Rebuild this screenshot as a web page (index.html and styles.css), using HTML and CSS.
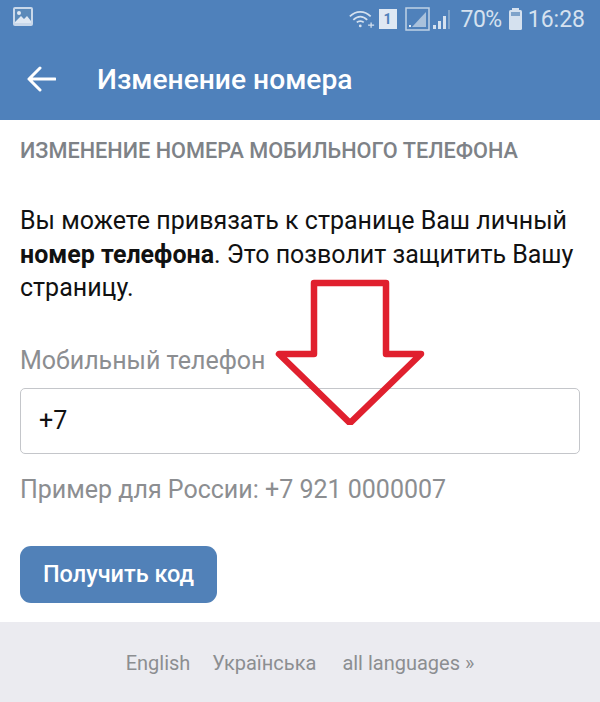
FILE: index.html
```html
<!DOCTYPE html>
<html lang="ru">
<head>
    <meta charset="UTF-8">
    <meta name="viewport" content="width=device-width, initial-scale=1.0">
    <title>Изменение номера</title>
    <link rel="stylesheet" href="styles.css">
</head>
<body>
    <div class="statusbar">
        <svg class="pic-icon" width="21" height="20" viewBox="0 0 21 20">
            <rect x="0" y="0" width="20" height="19" rx="2" fill="#c9d8ea"/>
            <rect x="2" y="2" width="16" height="14" fill="#5b8aba"/>
            <circle cx="6" cy="6" r="2" fill="#dfe8f3"/>
            <path d="M2 15 L8 9 L11 12 L14 9 L18 14 L18 16 L2 16 Z" fill="#dfe8f3"/>
        </svg>
        <div class="status-right">
            <svg class="wifi" width="26" height="20" viewBox="0 0 30 20">
                <path d="M1 7 C8 0 18 0 25 7" fill="none" stroke="#d5e1ef" stroke-width="2"/>
                <path d="M5 11 C10 6 16 6 21 11" fill="none" stroke="#d5e1ef" stroke-width="2"/>
                <path d="M9 14 C11 12 15 12 17 14" fill="none" stroke="#d5e1ef" stroke-width="2"/>
                <circle cx="13" cy="18" r="1.6" fill="#d5e1ef"/>
                <path d="M22 17 L29 17 M25.500 14 L25.500 20" stroke="#d5e1ef" stroke-width="1.500"/>
            </svg>
            <span class="sim">1</span>
            <svg class="signal-box" width="25" height="24" viewBox="0 0 25 24">
                <rect x="1" y="1" width="23" height="22" fill="none" stroke="#c0d2e6" stroke-width="1.500"/>
                <path d="M7 20 L21 20 L21 5 Z" fill="#a9c1dc"/>
                <rect x="4" y="18" width="2" height="2" fill="#e6eef6"/>
            </svg>
            <svg class="signal" width="20" height="22" viewBox="0 0 20 22">
                <rect x="1" y="17" width="3" height="4" fill="#d5e1ef"/>
                <rect x="6" y="13" width="3" height="8" fill="#d5e1ef"/>
                <rect x="11" y="8" width="3" height="13" fill="#d5e1ef"/>
                <rect x="16" y="2" width="2" height="19" fill="#7fa3ca"/>
            </svg>
            <span class="percent">70%</span>
            <svg class="battery" width="15" height="22" viewBox="0 0 15 22">
                <rect x="4" y="0" width="7" height="3" fill="#d5e1ef"/>
                <rect x="1" y="2" width="13" height="20" rx="1.500" fill="#d5e1ef"/>
                <rect x="3" y="4" width="9" height="4" fill="#7fa3ca"/>
            </svg>
            <span class="time">16:28</span>
        </div>
    </div>
    <div class="header">
        <svg class="back" width="30" height="26" viewBox="0 0 30 26">
            <path d="M14 2 L3 13 L14 24 M3 13 L29 13" fill="none" stroke="#fff" stroke-width="3" stroke-linecap="round" stroke-linejoin="round"/>
        </svg>
        <h1>Изменение номера</h1>
    </div>
    <div class="content">
        <h2>Изменение номера мобильного телефона</h2>
        <p class="intro">Вы можете привязать к странице Ваш личный <b>номер телефона</b>. Это позволит защитить Вашу страницу.</p>
        <label class="field-label">Мобильный телефон</label>
        <input class="phone" type="text" value="+7">
        <div class="hint">Пример для России: +7 921 0000007</div>
        <button class="submit">Получить код</button>
    </div>
    <div class="footer">
        <a href="#">English</a>
        <a href="#">Українська</a>
        <a href="#">all languages »</a>
    </div>
    <svg class="arrow" width="152" height="146" viewBox="0 0 152 146">
        <path d="M39 4 L111 4 L111 75 L146 75 L75 144 L4 75 L39 75 Z" fill="none" stroke="#e0202e" stroke-width="6.500" stroke-linejoin="round"/>
    </svg>
</body>
</html>
```

FILE: styles.css
```css
*{
    margin: 0;
    padding: 0;
    box-sizing: border-box;
}
html,body{
    width: 100%;
    height: 100%;
}
body{
    position: relative;
    height: 702px;
    overflow: hidden;
    background-color: #fff;
    font-family: Roboto, "Noto Sans", sans-serif;
    color: #000;
}

.statusbar{
    height: 40px;
    background-color: #4f81bb;
    display: flex;
    justify-content: space-between;
    align-items: center;
    padding: 0 15px 2px 13px;
}
.pic-icon{
    margin-bottom: 4px;
}
.status-right{
    display: flex;
    align-items: center;
    color: #d5e1ef;
    font-size: 23px;
}
.wifi{
    margin-right: 4px;
}
.sim{
    width: 18px;
    height: 20px;
    margin-right: 8px;
    background-color: #dfe8f3;
    color: #4f81bb;
    font-size: 14px;
    font-weight: 700;
    line-height: 20px;
    text-align: center;
}
.signal{
    margin-left: 2px;
}
.percent{
    margin-left: 9px;
    letter-spacing: -0.5px;
}
.battery{
    margin: 0 5px 0 6px;
}

.header{
    height: 81px;
    margin-top: -1px;
    background-color: #4f81bb;
    display: flex;
    align-items: center;
    padding: 0 0 1px 26px;
}
.back{
    margin-right: 41px;
}
.header h1{
    color: #fff;
    font-size: 28.200px;
    font-weight: 500;
}

.content{
    height: 502px;
    padding: 0 20px;
}
.content h2{
    padding-top: 20px;
    color: #7e8287;
    font-size: 21.700px;
    line-height: 22px;
    font-weight: 500;
    text-transform: uppercase;
}
.intro{
    margin-top: 42px;
    font-size: 25px;
    line-height: 33.500px;
    color: #111;
}
.field-label{
    display: block;
    margin-top: 42px;
    color: #8c8e91;
    font-size: 25px;
    line-height: 28px;
}
.phone{
    display: block;
    width: 560px;
    height: 66px;
    margin-top: 13px;
    padding: 0 18px;
    border: 1px solid #c4c6ca;
    border-radius: 5px;
    background-color: #fff;
    font-family: inherit;
    font-size: 25px;
    color: #111;
}
.hint{
    margin-top: 22px;
    color: #8c8e91;
    font-size: 25px;
    line-height: 28px;
}
.submit{
    display: block;
    width: 197px;
    height: 57px;
    margin-top: 42px;
    border: none;
    border-radius: 11px;
    background-color: #5181b8;
    color: #fff;
    font-family: inherit;
    font-size: 23.500px;
    font-weight: 500;
}

.footer{
    height: 80px;
    background-color: #ebebf0;
    display: flex;
    justify-content: center;
    padding-top: 28px;
    font-size: 20px;
}
.footer a{
    color: #8c8e91;
    text-decoration: none;
    line-height: 26px;
    margin-left: 22px;
}
.footer a:first-child{
    margin-left: 0;
}
.footer a:last-child{
    margin-left: 26px;
}

.arrow{
    position: absolute;
    left: 275px;
    top: 279px;
}
```
